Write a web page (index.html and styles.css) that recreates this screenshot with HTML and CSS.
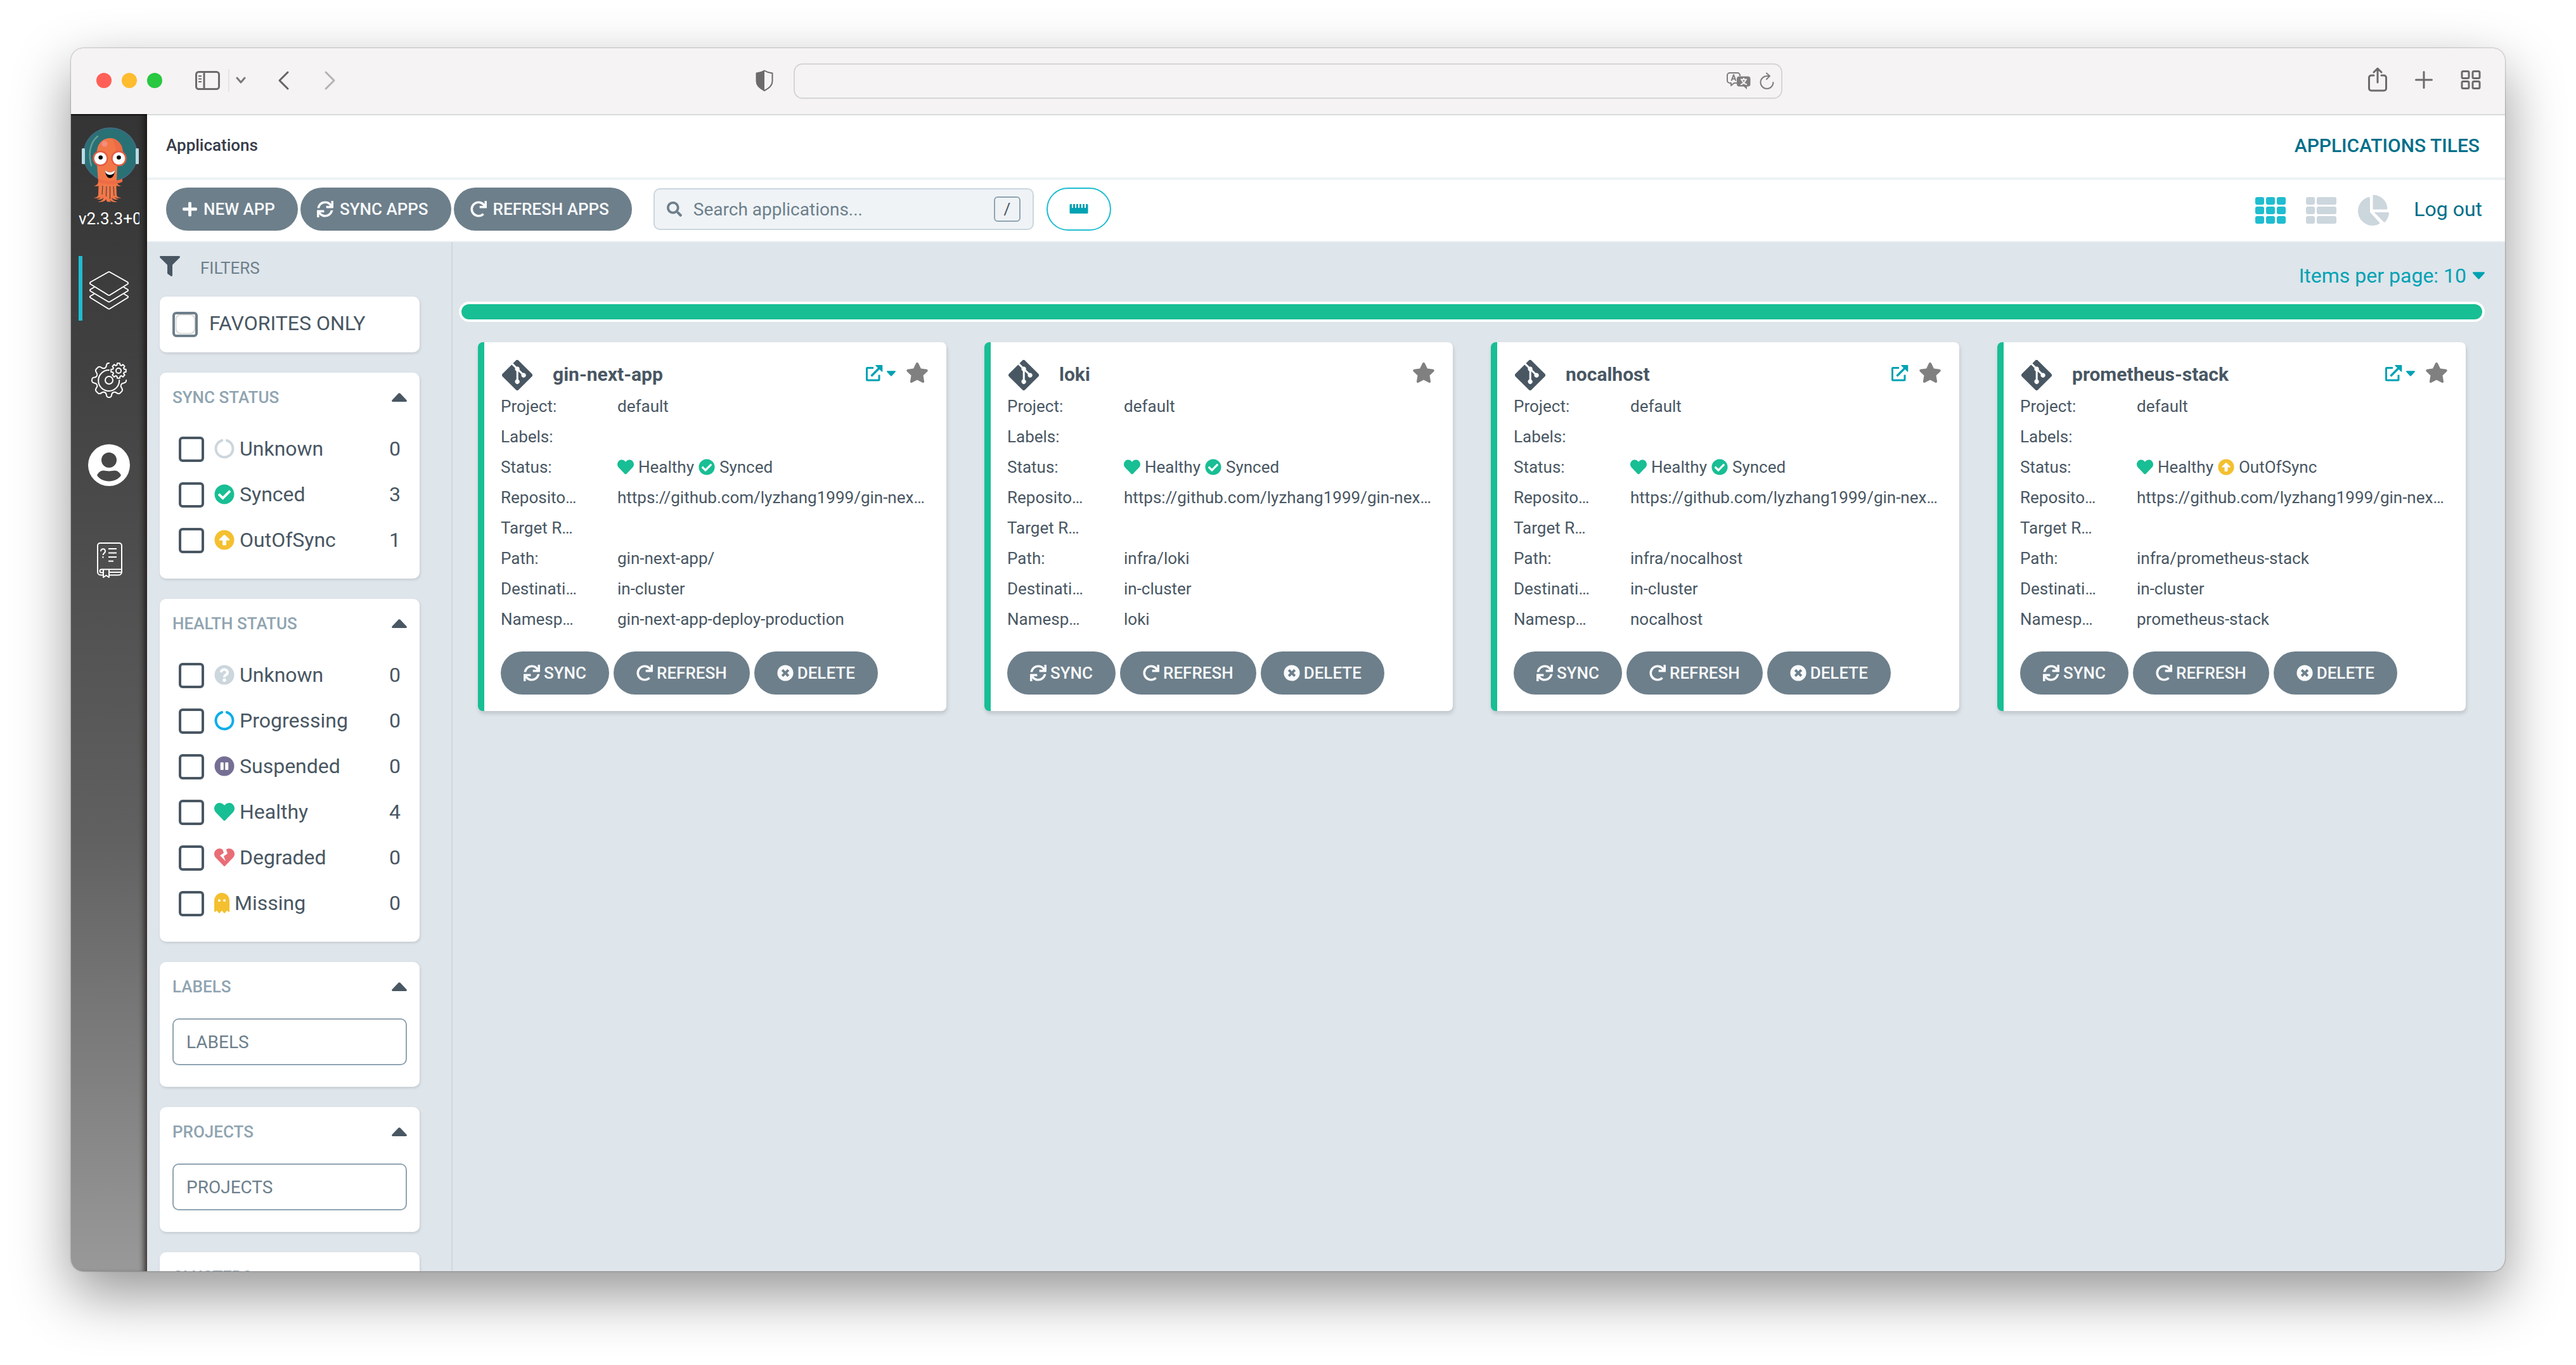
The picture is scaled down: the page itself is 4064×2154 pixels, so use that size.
FILE: index.html
```html
<!DOCTYPE html>
<html lang="en">
<head>
<meta charset="utf-8">
<title>Applications</title>
<link rel="stylesheet" href="styles.css">
</head>
<body>
<svg class="sprite" aria-hidden="true">
  <symbol id="plus" viewBox="0 0 448 512"><path d="M416 208H272V64c0-17.67-14.33-32-32-32h-32c-17.67 0-32 14.33-32 32v144H32c-17.67 0-32 14.33-32 32v32c0 17.67 14.33 32 32 32h144v144c0 17.67 14.33 32 32 32h32c17.67 0 32-14.33 32-32V304h144c17.67 0 32-14.33 32-32v-32c0-17.67-14.33-32-32-32z"/></symbol>
  <symbol id="sync" viewBox="0 0 512 512"><path d="M440.65 12.57l4 82.77A247.16 247.16 0 0 0 255.83 8C134.73 8 33.91 94.92 12.29 209.82A12 12 0 0 0 24.09 224h49.05a12 12 0 0 0 11.67-9.26 175.91 175.91 0 0 1 317-56.94l-101.46-4.86a12 12 0 0 0-12.57 12v47.41a12 12 0 0 0 12 12H500a12 12 0 0 0 12-12V12a12 12 0 0 0-12-12h-47.37a12 12 0 0 0-11.98 12.57zM255.83 432a175.61 175.61 0 0 1-146-77.8l101.8 4.87a12 12 0 0 0 12.57-12v-47.4a12 12 0 0 0-12-12H12a12 12 0 0 0-12 12V500a12 12 0 0 0 12 12h47.35a12 12 0 0 0 12-12.6l-4.15-82.57A247.17 247.17 0 0 0 255.83 504c121.11 0 221.93-86.92 243.55-201.82a12 12 0 0 0-11.8-14.18h-49.05a12 12 0 0 0-11.67 9.26A175.86 175.86 0 0 1 255.83 432z"/></symbol>
  <symbol id="redo" viewBox="0 0 512 512"><path d="M500.33 0h-47.41a12 12 0 0 0-12 12.57l4 82.76A247.42 247.42 0 0 0 256 8C119.34 8 7.9 119.53 8 256.19 8.1 393.07 119.1 504 256 504a247.1 247.1 0 0 0 166.18-63.91 12 12 0 0 0 .48-17.43l-34-34a12 12 0 0 0-16.38-.55A176 176 0 1 1 402.1 157.8l-101.53-4.87a12 12 0 0 0-12.57 12v47.41a12 12 0 0 0 12 12h200.33a12 12 0 0 0 12-12V12a12 12 0 0 0-12-12z"/></symbol>
  <symbol id="search" viewBox="0 0 512 512"><path d="M505 442.7L405.3 343c-4.5-4.5-10.6-7-17-7H372c27.6-35.3 44-79.7 44-128C416 93.1 322.9 0 208 0S0 93.1 0 208s93.1 208 208 208c48.3 0 92.7-16.4 128-44v16.3c0 6.4 2.5 12.5 7 17l99.7 99.7c9.4 9.4 24.6 9.4 33.9 0l28.3-28.3c9.4-9.4 9.4-24.6.1-34zM208 336c-70.7 0-128-57.2-128-128 0-70.7 57.2-128 128-128 70.7 0 128 57.2 128 128 0 70.7-57.2 128-128 128z"/></symbol>
  <symbol id="filter" viewBox="0 0 512 512"><path d="M487.976 0H24.028C2.71 0-8.047 25.866 7.058 40.971L192 225.941V432c0 7.831 3.821 15.17 10.237 19.662l80 55.98C298.02 518.69 320 507.493 320 487.98V225.941l184.947-184.97C520.021 25.896 509.338 0 487.976 0z"/></symbol>
  <symbol id="heart" viewBox="0 0 512 512"><path d="M462.3 62.6C407.5 15.9 326 24.3 275.7 76.2L256 96.5l-19.7-20.3C186.1 24.3 104.5 15.9 49.7 62.6c-62.8 53.6-66.1 149.8-9.9 207.9l193.5 199.8c12.5 12.9 32.8 12.9 45.3 0l193.5-199.8c56.3-58.1 53-154.3-9.8-207.9z"/></symbol>
  <symbol id="broken" viewBox="0 0 512 512"><path d="M473.7 73.8l-2.4-2.5c-46-47-118-51.7-169.6-14.8L336 159.9l-96 64 48 128-144-144 96-64-28.6-86.5C159.7 19.6 87 24 40.7 71.4l-2.4 2.4C-10.4 123.6-12.5 202.9 31 256l212.1 218.6c7.1 7.3 18.6 7.3 25.7 0L481 255.9c43.5-53 41.4-132.3-7.3-182.1z"/></symbol>
  <symbol id="check" viewBox="0 0 512 512"><path d="M504 256c0 136.967-111.033 248-248 248S8 392.967 8 256 119.033 8 256 8s248 111.033 248 248zM227.314 387.314l184-184c6.248-6.248 6.248-16.379 0-22.627l-22.627-22.627c-6.248-6.249-16.379-6.249-22.628 0L216 308.118l-70.059-70.059c-6.248-6.248-16.379-6.248-22.628 0l-22.627 22.627c-6.248 6.248-6.248 16.379 0 22.627l104 104c6.249 6.249 16.379 6.249 22.628.001z"/></symbol>
  <symbol id="up" viewBox="0 0 512 512"><circle cx="256" cy="256" r="248"/><path fill="#fff" d="M256 122c7 0 13 3 18 8l106 106c9 9 9 22 0 31-9 8-20 8-30 0h-46v101c0 14-9 24-24 24h-48c-15 0-24-10-24-24V267h-46c-10 8-21 8-30 0-9-9-9-22 0-31l106-106c5-5 11-8 18-8z"/></symbol>
  <symbol id="question" viewBox="0 0 512 512"><circle cx="256" cy="256" r="248"/><path fill="none" stroke="#fff" stroke-width="66" stroke-linejoin="round" d="M171 190c10-62 74-84 122-62 52 26 54 94 6 124-30 19-43 26-43 62"/><circle cx="256" cy="386" r="44" fill="#fff"/></symbol>
  <symbol id="pause" viewBox="0 0 512 512"><circle cx="256" cy="256" r="248"/><rect x="156" y="160" width="80" height="192" rx="16" fill="#fff"/><rect x="276" y="160" width="80" height="192" rx="16" fill="#fff"/></symbol>
  <symbol id="times" viewBox="0 0 512 512"><path fill-rule="evenodd" d="M256 8a248 248 0 1 0 0 496 248 248 0 0 0 0-496zM190 134l66 66 66-66 56 56-66 66 66 66-56 56-66-66-66 66-56-56 66-66-66-66z"/></symbol>
  <symbol id="notch" viewBox="0 0 512 512"><path d="M288 39.056v16.659c0 10.804 7.281 20.159 17.686 23.066C383.204 100.434 440 171.518 440 256c0 101.689-82.295 184-184 184-101.689 0-184-82.295-184-184 0-84.47 56.786-155.564 134.312-177.219C216.719 75.874 224 66.517 224 55.712V39.064c0-15.709-14.834-27.153-30.046-23.234C86.603 43.482 7.394 141.206 8.003 257.332c.72 137.052 111.477 246.956 248.531 246.667C393.255 503.711 504 392.788 504 256c0-115.633-79.14-212.779-186.211-240.236C302.678 11.889 288 23.456 288 39.056z"/></symbol>
  <symbol id="ghost" viewBox="0 0 384 512"><path d="M186.1.09C81.01 3.24 0 94.92 0 200.05v263.92c0 14.26 17.23 21.39 27.31 11.31l24.92-18.53c6.66-4.95 16-3.99 21.51 2.21l42.95 48.35c6.25 6.25 16.38 6.25 22.63 0l40.72-45.85c6.37-7.17 17.56-7.17 23.92 0l40.72 45.85c6.25 6.25 16.38 6.25 22.63 0l42.95-48.35c5.51-6.2 14.85-7.17 21.51-2.21l24.92 18.53c10.08 10.08 27.31 2.94 27.31-11.31V192C384 84 294.83-3.17 186.1.09zM128 224c-17.67 0-32-14.33-32-32s14.33-32 32-32 32 14.33 32 32-14.33 32-32 32zm128 0c-17.67 0-32-14.33-32-32s14.33-32 32-32 32 14.33 32 32-14.33 32-32 32z"/></symbol>
  <symbol id="star" viewBox="0 0 576 512"><path d="M259.3 17.8L194 150.2 47.9 171.5c-26.2 3.8-36.7 36.1-17.7 54.6l105.7 103-25 145.5c-4.5 26.3 23.2 46 46.4 33.7L288 439.6l130.7 68.7c23.2 12.2 50.9-7.4 46.4-33.7l-25-145.5 105.7-103c19-18.5 8.5-50.8-17.7-54.6L382 150.2 316.7 17.8c-11.7-23.6-45.6-23.9-57.4 0z"/></symbol>
  <symbol id="git" viewBox="0 32 448 448"><path d="M439.55 236.05L244 40.45a28.87 28.87 0 0 0-40.81 0l-40.66 40.63 51.52 51.52c27.06-9.14 52.68 16.77 43.39 43.68l49.66 49.66c34.23-11.8 61.18 31 35.47 56.69-26.49 26.49-70.21-2.87-56-37.34L240.22 199v121.85c25.3 12.54 22.26 41.85 9.08 55a34.34 34.34 0 0 1-48.55 0c-17.57-17.6-11.07-46.91 11.25-56v-123c-20.8-8.51-24.6-30.74-18.64-45L142.57 101 8.45 235.14a28.86 28.86 0 0 0 0 40.81l195.61 195.6a28.86 28.86 0 0 0 40.8 0l194.69-194.69a28.86 28.86 0 0 0 0-40.81z"/></symbol>
  <symbol id="external" viewBox="0 0 28 28"><path fill="none" stroke="currentColor" stroke-width="3" stroke-linejoin="round" d="M13 5.500H3.500a1 1 0 0 0-1 1V24a1 1 0 0 0 1 1H21a1 1 0 0 0 1-1v-7.500"/><path fill="none" stroke="currentColor" stroke-width="3.400" d="M9.500 18.500L23 5"/><path d="M17 1h9.500a.8.8 0 0 1 .8.800V11c0 .8-.7 1-1.200.5L16.500 2.300C16 1.700 16.300 1 17 1z"/></symbol>
  <symbol id="caret-down" viewBox="0 0 20 12"><path d="M1.500 0h17c1.300 0 1.900 1.400 1 2.300l-8.300 9c-.7.7-1.700.7-2.400 0L.5 2.300C-.4 1.400.2 0 1.500 0z"/></symbol>
  <symbol id="caret-up" viewBox="0 0 24 14"><path d="M1.500 14h21c1.300 0 1.900-1.500 1-2.400L13.400.8c-.8-.9-2-.9-2.800 0L.5 11.600c-.9.900-.3 2.400 1 2.400z"/></symbol>
</svg>

<div class="window">
  <header class="titlebar">
    <div class="titlebar-left">
      <span class="light light-red"></span><span class="light light-yellow"></span><span class="light light-green"></span>
      <button class="chrome chrome-side" aria-label="Show sidebar"><svg width="40" height="32" viewBox="0 0 40 32" fill="none" stroke="#6c6a6b" stroke-width="3"><rect x="1.500" y="2.500" width="36" height="27" rx="4"/><path d="M14 3v26"/><path stroke-width="2" d="M5 9h5M5 13.500h5M5 18h5"/></svg></button>
      <span class="chrome-divider"></span>
      <button class="chrome chrome-chevron" aria-label="Tab groups"><svg width="16" height="12" viewBox="0 0 16 12" fill="none" stroke="#7a7879" stroke-width="3" stroke-linecap="round" stroke-linejoin="round"><path d="M2 2l6 7 6-7"/></svg></button>
      <button class="chrome chrome-back" aria-label="Back"><svg width="20" height="32" viewBox="0 0 20 32" fill="none" stroke="#656364" stroke-width="3" stroke-linecap="round" stroke-linejoin="round"><path d="M16 3L3 16l13 13"/></svg></button>
      <button class="chrome chrome-forward" aria-label="Forward"><svg width="20" height="32" viewBox="0 0 20 32" fill="none" stroke="#b4b2b3" stroke-width="3" stroke-linecap="round" stroke-linejoin="round"><path d="M4 3l13 13L4 29"/></svg></button>
      <button class="chrome chrome-shield" aria-label="Privacy report"><svg width="28" height="34" viewBox="0 0 28 34"><path fill="none" stroke="#6c6a6b" stroke-width="2" stroke-linejoin="round" d="M14 1.500c4 2.500 8 3.500 12.500 4V18c0 7-5.500 11.500-12.500 15C7 29.500 1.500 25 1.500 18V5.500c4.500-.5 8.500-1.500 12.500-4z"/><path fill="#6c6a6b" d="M14 1.500V33C7 29.500 1.500 25 1.500 18V5.500c4.500-.5 8.500-1.500 12.500-4z"/></svg></button>
    </div>
    <div class="address">
      <input class="address-input" type="text" aria-label="Address">
      <button class="chrome" aria-label="Translate"><svg width="38" height="28" viewBox="0 0 38 28" fill="none" stroke="#7f7d7e" stroke-width="2" stroke-linejoin="round"><path d="M16 17h-4l-5 4v-4H5a4 4 0 0 1-4-4V5a4 4 0 0 1 4-4h12a4 4 0 0 1 4 4v1"/><path d="M7.500 13.500L11 4l3.500 9.500M8.700 10.500h4.600"/><path fill="#7f7d7e" stroke="none" d="M20 6.500h13.500a4 4 0 0 1 4 4v8a4 4 0 0 1-4 4H32V27l-5-4.500h-7a4 4 0 0 1-4-4v-8a4 4 0 0 1 4-4z"/><path stroke="#f5f4f5" d="M22 11.500h10M27 9v2.500M30 12c-1 3.500-4 6.500-8 7.500M24 12c1 3.500 4 6.500 8 7.500"/></svg></button>
      <button class="chrome" aria-label="Reload"><svg width="24" height="28" viewBox="0 0 24 28" fill="none" stroke="#7f7d7e" stroke-width="2" stroke-linecap="round" stroke-linejoin="round"><path d="M21.500 16a10 10 0 1 1-10-10H16M11 1.500L16 6l-5 5"/></svg></button>
    </div>
    <div class="titlebar-right">
      <button class="chrome" aria-label="Share"><svg width="30" height="40" viewBox="0 0 30 40" fill="none" stroke="#6c6a6b" stroke-width="3" stroke-linecap="round" stroke-linejoin="round"><path d="M9 13H5a3.500 3.500 0 0 0-3.500 3.500v17A3.500 3.500 0 0 0 5 37h20a3.500 3.500 0 0 0 3.500-3.500v-17A3.500 3.500 0 0 0 25 13h-4M15 24V3M9 8l6-6 6 6"/></svg></button>
      <button class="chrome" aria-label="New tab"><svg width="28" height="28" viewBox="0 0 28 28" fill="none" stroke="#6c6a6b" stroke-width="3" stroke-linecap="round"><path d="M14 1.500v25M1.500 14h25"/></svg></button>
      <button class="chrome" aria-label="Tab overview"><svg width="32" height="30" viewBox="0 0 32 30" fill="none" stroke="#6c6a6b" stroke-width="3"><rect x="2" y="1.500" width="11" height="11" rx="2"/><rect x="19" y="1.500" width="11" height="11" rx="2"/><rect x="2" y="17.500" width="11" height="11" rx="2"/><rect x="19" y="17.500" width="11" height="11" rx="2"/></svg></button>
    </div>
  </header>

  <div class="app">
    <nav class="rail" aria-label="Main">
      <svg class="logo" viewBox="0 0 92 120" aria-label="Argo">
        <circle cx="46" cy="44" r="42" fill="#297174" stroke="#3f6a80" stroke-width="2"/>
        <path d="M26 15C14 25 11 42 16 61" fill="none" stroke="#7ba8a5" stroke-width="2.400" stroke-linecap="round" opacity=".8"/>
        <rect x="1" y="34" width="5" height="25" rx="1.500" fill="#b9dbe6"/><rect x="86" y="34" width="5" height="25" rx="1.500" fill="#b9dbe6"/>
        <path fill="#f27748" d="M45.500 18C34 18 25 27 25 40v20l2 27c-1 4-3 6-7 6 3 1.500 6 1 7.500 0l-.5 15c-1 3-4 4-8 4 4 1.200 9 1 11.500-1-.5 2-3 3-6 3.500 5 1 10 0 11-3-.5 4-4 6-9 7 5 1 10.500 0 13-4 1 3 1 4 3 4h5c-1-.5-2-1.500-2.500-3 3 3 7 4 12 3-5-1-8-3-9-7 2 3 6 4 11 3-3-.5-5-1.500-6-3.500 3 2 7 2.200 11 1-4 0-7-1-8-4l-.5-15c1.500 1 5 1.500 8 0-4 0-6-2-7.500-6l1-27V40C66 27 57 18 45.500 18z"/>
        <path fill="#ed6b45" d="M48 18c10 2 18 10 18 22v12H52c4-12 3-25-4-34z"/>
        <path fill="#ed6b45" d="M27 82c12 5 26 5 38 0v5c-12 5-26 5-38 0z"/>
        <path stroke="#3a3a3a" stroke-width="1" fill="none" d="M34 93l-1 14M40 94l-.5 16M45.500 94v20M51 94l1 15M57 93l1 14"/>
        <circle cx="37" cy="27" r="4.500" fill="#f58d7c"/>
        <circle cx="30.500" cy="50" r="11" fill="#fff" stroke="#e55a43" stroke-width="2.500"/><circle cx="59.500" cy="50" r="11" fill="#fff" stroke="#e55a43" stroke-width="2.500"/>
        <circle cx="30.700" cy="48.500" r="3.300" fill="#000"/><circle cx="59.500" cy="48.500" r="3.300" fill="#000"/>
        <path fill="#000" d="M37.500 68.500c5 4.500 10.500 4.500 16 0-1 8-4 12.500-8 12.500s-7-4.500-8-12.500z"/><path fill="#fff" d="M37.500 68.500c5 4.500 10.500 4.500 16 0-.5 3-1.500 4.500-2.500 5.500-3.500 2.500-7.500 2.500-11 0-1-1-2-2.500-2.500-5.500z"/>
      </svg>
      <a class="version" href="#">v2.3.3+07</a>
      <a class="rail-item rail-item-active" href="#" aria-label="Applications"><svg viewBox="0 0 84 84" fill="none" stroke="#fff" stroke-width="2" stroke-linejoin="round"><g transform="translate(11 15)"><path d="M29.500 1.500a3 3 0 0 1 3 0L60 17c1.500 1 1.500 2.500 0 3.500L32.500 37.500a3 3 0 0 1-3 0L2 20.500C.5 19.500.5 18 2 17z"/><path d="M8 25l-6 3.500c-1.500 1-1.500 2 0 3L29.500 48a3 3 0 0 0 3 0L60 31.500c1.500-1 1.500-2 0-3L54 25"/><path d="M8 35.500L2 39c-1.500 1-1.500 2 0 3l27.500 17a3 3 0 0 0 3 0L60 42c1.500-1 1.500-2 0-3l-6-3.500"/></g></svg></a>
      <a class="rail-item" href="#" aria-label="Settings"><svg viewBox="0 0 84 84" fill="none" stroke="#fff" stroke-width="2" stroke-linejoin="round" stroke-linecap="round"><g transform="translate(14 17)"><path d="M28 1c-2.500 0-3.800 1-4 3.500-.2 2-.3 3.500-3 4.500-2 .8-3 .5-4.500-.6-2.500-2-4-2.500-6-.6l-2.500 2.500c-2 2-1.500 3.500.4 6 1.200 1.500 1.500 2.500.6 4.500-1 2.200-2 2.500-4 2.800-3 .3-4 1.200-4 4.400s1 4.100 4 4.400c2 .3 3 .6 4 2.800.9 2 .6 3-.6 4.500-1.900 2.500-2.400 4-.4 6l2.500 2.500c2 1.900 3.500 1.400 6-.6 1.500-1.100 2.500-1.400 4.500-.6 2.700 1 2.800 2.500 3 4.500.2 2.500 1.500 3.500 4 3.500s3.800-1 4-3.500c.2-2 .3-3.500 3-4.500 2-.8 3-.5 4.500.6 2.500 2 4 2.500 6 .6l2.500-2.500c2-2 1.500-3.500-.4-6-1.200-1.500-1.500-2.500-.6-4.500 1-2.200 2-2.500 4-2.800 3-.3 4.200-1.200 4.200-4.400"/><path d="M28 12a16.500 16.500 0 1 0 16.200 16"/><circle cx="28" cy="28" r="6"/><g transform="translate(43 13)"><circle r="4"/><path d="M-2-11.800h4l.6 3 1.800.8 2.500-1.700 2.800 2.800L8-4.400l.8 1.800 3 .6v4l-3 .6L8 4.400l1.700 2.500-2.800 2.800L4.400 8l-1.800.8-.6 3h-4l-.6-3L-4.400 8l-2.500 1.700-2.800-2.800L-8 4.400l-.8-1.800-3-.6v-4l3-.6.8-1.800-1.700-2.500 2.800-2.800L-4.400-8l1.800-.8z"/></g></g></svg></a>
      <a class="rail-item" href="#" aria-label="User info"><svg viewBox="0 0 84 84"><path fill="#fff" fill-rule="evenodd" d="M42 4a33 33 0 1 0 0 66 33 33 0 0 0 0-66zm0 13a12 12 0 1 1 0 24 12 12 0 0 1 0-24zM23 53c2-4.500 6-7.500 10-7.500 3 0 5 1 9 1s6-1 9-1c4 0 8 3 10 7.500-4 6-11 9.500-19 9.500S27 59 23 53z"/></svg></a>
      <a class="rail-item" href="#" aria-label="Documentation"><svg viewBox="0 0 84 84" fill="none" stroke="#fff" stroke-width="2" stroke-linejoin="round"><g transform="translate(23 17)"><path d="M10 51.500H6a5 5 0 0 1-5-5V5a4 4 0 0 1 4-4h30a4 4 0 0 1 4 4v41.500a5 5 0 0 1-5 5H19M39 42.500H7a2 2 0 0 0 0 5h3M19 47h20M10 43v12l4.500-3 4.500 3V43"/><path d="M18 10h13M18 16.500h13M18 23h13M18 29.500h8M6 14c.5-5 7-5 7 0 0 3-3.500 3-3.500 6M9.500 22v2.500"/></g></svg></a>
    </nav>

    <div class="content">
      <div class="crumbs">
        <span class="crumb">Applications</span>
        <span class="page-title">APPLICATIONS TILES</span>
      </div>

      <div class="toolbar">
        <div class="toolbar-actions">
          <button class="btn btn-bar"><svg class="glyph glyph-plus"><use href="#plus"/></svg>NEW APP</button>
          <button class="btn btn-bar"><svg class="glyph"><use href="#sync"/></svg>SYNC APPS</button>
          <button class="btn btn-bar"><svg class="glyph"><use href="#redo"/></svg>REFRESH APPS</button>
        </div>
        <div class="search">
          <svg class="search-icon"><use href="#search"/></svg>
          <input class="search-input" type="text" placeholder="Search applications..." aria-label="Search applications">
          <kbd class="search-key">/</kbd>
        </div>
        <button class="ruler" aria-label="Compact view"><svg width="30" height="16" viewBox="0 0 30 16"><path fill="#00a2b3" d="M2 0h2v6h2V0h3v6h2V0h3v6h2V0h3v6h2V0h3v6h2V0h2a1.500 1.500 0 0 1 1.500 1.500v12A1.500 1.500 0 0 1 28 15H2a1.500 1.500 0 0 1-1.500-1.500v-12A1.500 1.500 0 0 1 2 0z"/></svg></button>
        <div class="views">
          <button class="view view-active" aria-label="Tiles"><svg width="48" height="44" viewBox="0 0 48 44"><rect y="1" width="14" height="12" rx="3"/><rect x="17" y="1" width="14" height="12" rx="3"/><rect x="34" y="1" width="14" height="12" rx="3"/><rect y="16" width="14" height="12" rx="3"/><rect x="17" y="16" width="14" height="12" rx="3"/><rect x="34" y="16" width="14" height="12" rx="3"/><rect y="31" width="14" height="12" rx="3"/><rect x="17" y="31" width="14" height="12" rx="3"/><rect x="34" y="31" width="14" height="12" rx="3"/></svg></button>
          <button class="view" aria-label="List"><svg width="48" height="44" viewBox="0 0 48 44"><rect y="1" width="14" height="12" rx="3"/><rect x="17" y="1" width="31" height="12" rx="3"/><rect y="16" width="14" height="12" rx="3"/><rect x="17" y="16" width="31" height="12" rx="3"/><rect y="31" width="14" height="12" rx="3"/><rect x="17" y="31" width="31" height="12" rx="3"/></svg></button>
          <button class="view" aria-label="Summary"><svg width="52" height="50" viewBox="0 0 52 50"><path d="M21 6.200c0-1.600-1.200-2.600-2.600-2.300A23 23 0 1 0 35.300 46.500c1.200-.8 1.200-2 .2-3L21 28z"/><path d="M25.500 2c0-1 .7-1.600 1.700-1.500A23 23 0 0 1 48.500 21.500c0 1.200-.6 2-1.700 2H25.500z"/><path d="M27.500 28h22c1 0 1.600.8 1.500 1.800-.7 5-2.500 9.500-6 13.200-.8.900-1.800.9-2.600.1z"/></svg></button>
          <a class="logout" href="#">Log out</a>
        </div>
      </div>

      <div class="body">
        <aside class="filters">
          <h2 class="filters-title"><svg class="filters-icon"><use href="#filter"/></svg>FILTERS</h2>
          <div class="panel panel-favorite">
            <input class="box box-favorite" type="checkbox" id="fav"><label for="fav">FAVORITES ONLY</label>
          </div>
          <section class="panel">
            <h3 class="panel-title">SYNC STATUS<svg class="caret-up"><use href="#caret-up"/></svg></h3>
            <ul class="options">
              <li><input class="box" type="checkbox" id="s1"><label for="s1"><svg class="state c-grey"><use href="#notch"/></svg>Unknown</label><span class="count">0</span></li>
              <li><input class="box" type="checkbox" id="s2"><label for="s2"><svg class="state c-green"><use href="#check"/></svg>Synced</label><span class="count">3</span></li>
              <li><input class="box" type="checkbox" id="s3"><label for="s3"><svg class="state c-yellow"><use href="#up"/></svg>OutOfSync</label><span class="count">1</span></li>
            </ul>
          </section>
          <section class="panel">
            <h3 class="panel-title">HEALTH STATUS<svg class="caret-up"><use href="#caret-up"/></svg></h3>
            <ul class="options">
              <li><input class="box" type="checkbox" id="h1"><label for="h1"><svg class="state c-grey"><use href="#question"/></svg>Unknown</label><span class="count">0</span></li>
              <li><input class="box" type="checkbox" id="h2"><label for="h2"><svg class="state c-blue"><use href="#notch"/></svg>Progressing</label><span class="count">0</span></li>
              <li><input class="box" type="checkbox" id="h3"><label for="h3"><svg class="state c-purple"><use href="#pause"/></svg>Suspended</label><span class="count">0</span></li>
              <li><input class="box" type="checkbox" id="h4"><label for="h4"><svg class="state c-green"><use href="#heart"/></svg>Healthy</label><span class="count">4</span></li>
              <li><input class="box" type="checkbox" id="h5"><label for="h5"><svg class="state c-red"><use href="#broken"/></svg>Degraded</label><span class="count">0</span></li>
              <li><input class="box" type="checkbox" id="h6"><label for="h6"><svg class="state state-narrow c-yellow"><use href="#ghost"/></svg>Missing</label><span class="count">0</span></li>
            </ul>
          </section>
          <section class="panel">
            <h3 class="panel-title">LABELS<svg class="caret-up"><use href="#caret-up"/></svg></h3>
            <input class="field" type="text" placeholder="LABELS" aria-label="Labels">
          </section>
          <section class="panel">
            <h3 class="panel-title">PROJECTS<svg class="caret-up"><use href="#caret-up"/></svg></h3>
            <input class="field" type="text" placeholder="PROJECTS" aria-label="Projects">
          </section>
          <section class="panel">
            <h3 class="panel-title">CLUSTERS<svg class="caret-up"><use href="#caret-up"/></svg></h3>
            <input class="field" type="text" placeholder="CLUSTERS" aria-label="Clusters">
          </section>
        </aside>

        <main class="main">
          <button class="paging">Items per page: 10<svg class="paging-caret"><use href="#caret-down"/></svg></button>
          <div class="health-bar"></div>
          <div class="tiles">
            <article class="tile">
              <header class="tile-head"><svg class="tile-git"><use href="#git"/></svg><h2 class="tile-name">gin-next-app</h2><a class="tile-link" href="#" aria-label="Open"><svg class="ext"><use href="#external"/></svg><svg class="ext-caret"><use href="#caret-down"/></svg></a><button class="fav" aria-label="Favorite"><svg><use href="#star"/></svg></button></header>
              <dl class="facts">
                <dt>Project:</dt><dd>default</dd>
                <dt>Labels:</dt><dd></dd>
                <dt>Status:</dt><dd class="status"><svg class="c-green"><use href="#heart"/></svg>Healthy<svg class="c-green"><use href="#check"/></svg>Synced</dd>
                <dt>Repository:</dt><dd>https://github.com/lyzhang1999/gin-next-app</dd>
                <dt>Target Revision:</dt><dd></dd>
                <dt>Path:</dt><dd>gin-next-app/</dd>
                <dt>Destination:</dt><dd>in-cluster</dd>
                <dt>Namespace:</dt><dd>gin-next-app-deploy-production</dd>
              </dl>
              <div class="tile-actions"><button class="btn"><svg class="glyph"><use href="#sync"/></svg>SYNC</button><button class="btn"><svg class="glyph"><use href="#redo"/></svg>REFRESH</button><button class="btn"><svg class="glyph"><use href="#times"/></svg>DELETE</button></div>
            </article>
            <article class="tile">
              <header class="tile-head"><svg class="tile-git"><use href="#git"/></svg><h2 class="tile-name">loki</h2><button class="fav" aria-label="Favorite"><svg><use href="#star"/></svg></button></header>
              <dl class="facts">
                <dt>Project:</dt><dd>default</dd>
                <dt>Labels:</dt><dd></dd>
                <dt>Status:</dt><dd class="status"><svg class="c-green"><use href="#heart"/></svg>Healthy<svg class="c-green"><use href="#check"/></svg>Synced</dd>
                <dt>Repository:</dt><dd>https://github.com/lyzhang1999/gin-next-app</dd>
                <dt>Target Revision:</dt><dd></dd>
                <dt>Path:</dt><dd>infra/loki</dd>
                <dt>Destination:</dt><dd>in-cluster</dd>
                <dt>Namespace:</dt><dd>loki</dd>
              </dl>
              <div class="tile-actions"><button class="btn"><svg class="glyph"><use href="#sync"/></svg>SYNC</button><button class="btn"><svg class="glyph"><use href="#redo"/></svg>REFRESH</button><button class="btn"><svg class="glyph"><use href="#times"/></svg>DELETE</button></div>
            </article>
            <article class="tile">
              <header class="tile-head"><svg class="tile-git"><use href="#git"/></svg><h2 class="tile-name">nocalhost</h2><a class="tile-link" href="#" aria-label="Open"><svg class="ext"><use href="#external"/></svg></a><button class="fav" aria-label="Favorite"><svg><use href="#star"/></svg></button></header>
              <dl class="facts">
                <dt>Project:</dt><dd>default</dd>
                <dt>Labels:</dt><dd></dd>
                <dt>Status:</dt><dd class="status"><svg class="c-green"><use href="#heart"/></svg>Healthy<svg class="c-green"><use href="#check"/></svg>Synced</dd>
                <dt>Repository:</dt><dd>https://github.com/lyzhang1999/gin-next-app</dd>
                <dt>Target Revision:</dt><dd></dd>
                <dt>Path:</dt><dd>infra/nocalhost</dd>
                <dt>Destination:</dt><dd>in-cluster</dd>
                <dt>Namespace:</dt><dd>nocalhost</dd>
              </dl>
              <div class="tile-actions"><button class="btn"><svg class="glyph"><use href="#sync"/></svg>SYNC</button><button class="btn"><svg class="glyph"><use href="#redo"/></svg>REFRESH</button><button class="btn"><svg class="glyph"><use href="#times"/></svg>DELETE</button></div>
            </article>
            <article class="tile">
              <header class="tile-head"><svg class="tile-git"><use href="#git"/></svg><h2 class="tile-name">prometheus-stack</h2><a class="tile-link" href="#" aria-label="Open"><svg class="ext"><use href="#external"/></svg><svg class="ext-caret"><use href="#caret-down"/></svg></a><button class="fav" aria-label="Favorite"><svg><use href="#star"/></svg></button></header>
              <dl class="facts">
                <dt>Project:</dt><dd>default</dd>
                <dt>Labels:</dt><dd></dd>
                <dt>Status:</dt><dd class="status"><svg class="c-green"><use href="#heart"/></svg>Healthy<svg class="c-yellow"><use href="#up"/></svg>OutOfSync</dd>
                <dt>Repository:</dt><dd>https://github.com/lyzhang1999/gin-next-app</dd>
                <dt>Target Revision:</dt><dd></dd>
                <dt>Path:</dt><dd>infra/prometheus-stack</dd>
                <dt>Destination:</dt><dd>in-cluster</dd>
                <dt>Namespace:</dt><dd>prometheus-stack</dd>
              </dl>
              <div class="tile-actions"><button class="btn"><svg class="glyph"><use href="#sync"/></svg>SYNC</button><button class="btn"><svg class="glyph"><use href="#redo"/></svg>REFRESH</button><button class="btn"><svg class="glyph"><use href="#times"/></svg>DELETE</button></div>
            </article>
          </div>
        </main>
      </div>
    </div>
  </div>
</div>
</body>
</html>
```
FILE: styles.css
```css
*, *::before { box-sizing: border-box; }
body {
  display: flex;
  height: 100vh;
  margin: 0;
  padding: 76px 112px 148px;
  overflow: hidden;
  background: #fff;
  color: #495763;
  font-family: Roboto, "Liberation Sans", sans-serif;
  font-size: 26px;
}
h2, h3, ul, dl, dd { margin: 0; padding: 0; }
ul { list-style: none; }
a { color: inherit; text-decoration: none; }
button {
  margin: 0; padding: 0; border: 0;
  background: none; color: inherit; font: inherit; cursor: pointer;
}
input { font: inherit; color: inherit; }
svg { display: block; flex: none; fill: currentColor; }
svg[fill="none"] { fill: none; }
.sprite { position: absolute; width: 0; height: 0; }

.window {
  display: flex;
  flex: 1;
  flex-direction: column;
  min-width: 0;
  overflow: hidden;
  border-radius: 20px;
  background: #dee5eb;
  box-shadow: 0 0 2px rgba(0, 0, 0, .6), 0 36px 90px rgba(0, 0, 0, .42);
}

/* browser chrome */
.titlebar {
  display: grid;
  grid-template-columns: 1fr 40.6% 1fr;
  align-items: center;
  height: 104px;
  background: #f5f3f4;
}
.titlebar-left { display: flex; align-items: center; padding: 0 32px 2px 40px; }
.titlebar-right { display: flex; align-items: center; justify-content: flex-end; gap: 44px; padding: 0 38px 4px 0; }
.light { width: 24px; height: 24px; margin-right: 16px; border-radius: 50%; }
.light-red { background: #ff5f57; }
.light-yellow { background: #febc2e; }
.light-green { background: #28c840; }
.chrome-side { margin-left: 36px; }
.chrome-divider { width: 2px; height: 36px; margin: 0 10px 0 12px; background: #e6e5e6; }
.chrome-back { margin-left: 50px; }
.chrome-forward { margin-left: 52px; }
.chrome-shield { margin-left: auto; }
.address {
  display: flex;
  align-items: center;
  gap: 14px;
  height: 56px;
  padding: 0 10px;
  border: 2px solid #d6d6d6;
  border-radius: 14px;
}
.address-input { flex: 1; min-width: 0; border: 0; background: none; outline: 0; }

/* left rail */
.app { display: flex; flex: 1; min-height: 0; }
.rail {
  flex: none;
  width: 120px;
  padding-top: 18px;
  border-top: 2px solid #111;
  background: linear-gradient(#343434, #414141 22%, #606060 62%, #999);
  box-shadow: inset -10px 0 10px -6px rgba(20, 14, 10, .8);
}
.logo { width: 92px; height: 120px; margin-left: 16px; }
.version {
  display: block;
  width: 96px;
  margin: 10px 0 44px 12px;
  overflow: hidden;
  color: #fff;
  line-height: 30px;
}
.rail-item {
  display: flex;
  align-items: center;
  height: 102px;
  margin: 0 0 40px 12px;
  border-left: 6px solid transparent;
}
.rail-item-active { border-color: #1fbdd0; }
.rail-item svg { width: 84px; height: 84px; }

/* top bars */
.content { display: flex; flex: 1; flex-direction: column; min-width: 0; border-top: 2px solid #d9dbdb; }
.crumbs {
  display: flex;
  flex: none;
  align-items: center;
  justify-content: space-between;
  height: 102px;
  padding: 0 40px 4px 30px;
  border-bottom: 4px solid #eef2f5;
  background: #fff;
  font-weight: 500;
}
.crumb { color: #363c4a; }
.page-title { color: #006f8a; font-size: 30px; }
.toolbar {
  display: flex;
  flex: none;
  align-items: center;
  height: 98px;
  padding: 0 36px 4px 30px;
  border-bottom: 2px solid #eef2f5;
  background: #fff;
}
.toolbar-actions { display: flex; gap: 4px; }
.btn {
  display: inline-flex;
  align-items: center;
  gap: 6px;
  height: 68px;
  padding: 0 36px;
  border-radius: 34px;
  background: #6d7f8b;
  color: #f8fafb;
  font-weight: 500;
  white-space: nowrap;
}
.btn-bar { gap: 10px; padding: 0 36px 0 26px; }
.glyph { width: 26px; height: 26px; }
.glyph-plus { width: 23px; }
.search {
  display: flex;
  align-items: center;
  width: 600px;
  height: 66px;
  margin: 0 20px 0 34px;
  padding: 0 19px;
  border: 2px solid #ccd6dd;
  border-radius: 10px;
  background: #eff3f6;
}
.search-icon { width: 24px; height: 24px; margin-right: 18px; color: #6d7f8b; }
.search-input { flex: 1; min-width: 0; padding: 0; border: 0; background: none; outline: 0; font-size: 28px; }
.search-input::placeholder { color: #6d7f8b; opacity: 1; }
.search-key {
  width: 42px;
  height: 40px;
  border: 2px solid #8fa4b1;
  border-radius: 6px;
  font: 26px/36px Roboto, "Liberation Sans", sans-serif;
  text-align: center;
}
.ruler {
  display: flex;
  align-items: center;
  justify-content: center;
  width: 102px;
  height: 68px;
  border: 2px solid #1fbdd0;
  border-radius: 34px;
}
.views { display: flex; align-items: center; gap: 32px; margin-left: auto; color: #ccd6dd; }
.view { padding-top: 4px; }
.view-active { color: #1fbdd0; }
.logout { margin-left: 6px; color: #006f8a; font-size: 32px; }

/* filters */
.body { display: flex; flex: 1; min-height: 0; }
.filters {
  flex: none;
  width: 482px;
  padding: 22px 50px 0 20px;
  overflow: hidden;
  border-right: 2px solid #d0d8dc;
}
.filters-title {
  display: flex;
  align-items: flex-end;
  gap: 32px;
  margin-bottom: 32px;
  color: #6d7f8b;
  font-size: 26px;
  font-weight: 400;
  line-height: 26px;
}
.filters-icon { width: 32px; height: 32px; color: #495763; }
.panel {
  margin-bottom: 32px;
  padding: 18px 20px 34px;
  border-radius: 10px;
  background: #fff;
  box-shadow: 1px 2px 4px rgba(0, 0, 0, .12);
}
.panel-favorite {
  display: flex;
  align-items: center;
  gap: 18px;
  padding: 24px 20px;
  font-size: 32px;
  line-height: 40px;
}
.panel-favorite label { padding-bottom: 4px; }
.panel-favorite { height: 88px; }
.box {
  appearance: none;
  flex: none;
  width: 40px;
  height: 40px;
  margin: 0;
  border: 4px solid #495763;
  border-radius: 6px;
}
.box-favorite { border-color: #6d7f8b; }
.box-favorite::before {
  content: "";
  display: block;
  height: 31px;
  margin-left: 1px;
  border-radius: 8px;
  box-shadow: inset 0 0 3px rgba(0, 0, 0, .5);
}
.panel-title {
  display: flex;
  align-items: center;
  justify-content: space-between;
  color: #8fa4b1;
  font-size: 26px;
  font-weight: 500;
  line-height: 42px;
}
.caret-up { width: 24px; height: 14px; color: #495763; }
.options { display: grid; gap: 32px; padding: 41px 10px 6px; font-size: 32px; line-height: 38px; }
.options li { display: flex; align-items: flex-start; gap: 16px; height: 40px; }
.options label { display: flex; flex: 1; align-items: center; gap: 8px; }
.state { width: 32px; height: 32px; }
.state-narrow { width: 24px; }
.field {
  width: 100%;
  height: 74px;
  margin-top: 29px;
  padding: 0 20px;
  border: 2px solid #8fa4b1;
  border-radius: 10px;
  background: #fff;
  font-size: 28px;
}
.field::placeholder { color: #6d7f8b; opacity: 1; }
.c-grey { color: #ccd6dd; }
.c-green { color: #18be94; }
.c-yellow { color: #f4c030; }
.c-blue { color: #0dadea; }
.c-purple { color: #766f94; }
.c-red { color: #e96d76; }

/* tiles */
.main { flex: 1; min-width: 0; padding: 34px 32px 0 10px; }
.paging {
  display: flex;
  align-items: center;
  gap: 10px;
  margin: 0 0 22px auto;
  color: #00a2b3;
  font-size: 32px;
  line-height: 38px;
}
.paging-caret { width: 19px; height: 12px; }
.health-bar { height: 32px; border: 4px solid #fff; border-radius: 16px; background: #18be94; }
.tiles {
  display: grid;
  grid-template-columns: repeat(4, minmax(0, 1fr));
  gap: 60px;
  padding: 32px 30px;
}
.tile {
  padding: 28px 28px 26px 26px;
  border-left: 10px solid #18be94;
  border-radius: 8px;
  background: #fff;
  box-shadow: 1px 4px 6px rgba(0, 0, 0, .14);
}
.tile-head { display: flex; align-items: center; height: 48px; }
.tile-git { width: 48px; height: 48px; margin: 0 32px 0 2px; }
.tile-name { flex: 1; padding-bottom: 4px; font-size: 30px; font-weight: 700; }
.tile-link { display: flex; align-items: center; gap: 6px; margin-right: 16px; padding-bottom: 6px; color: #00a2b3; }
.ext { width: 28px; height: 28px; }
.ext-caret { width: 14px; height: 9px; }
.fav { padding-bottom: 8px; color: #808080; }
.fav svg { width: 36px; height: 36px; }
.facts { display: grid; grid-template-columns: 184px minmax(0, 1fr); margin-top: 1px; line-height: 48px; }
.facts dt, .facts dd {
  height: 48px;
  overflow: hidden;
  text-overflow: ellipsis;
  white-space: nowrap;
}
.facts dt { width: 122px; }
.facts dd { margin-right: 6px; }
.facts .status { display: flex; align-items: center; gap: 7px; }
.status svg { width: 26px; height: 26px; }
.tile-actions { display: flex; gap: 7px; margin-top: 27px; }
```
